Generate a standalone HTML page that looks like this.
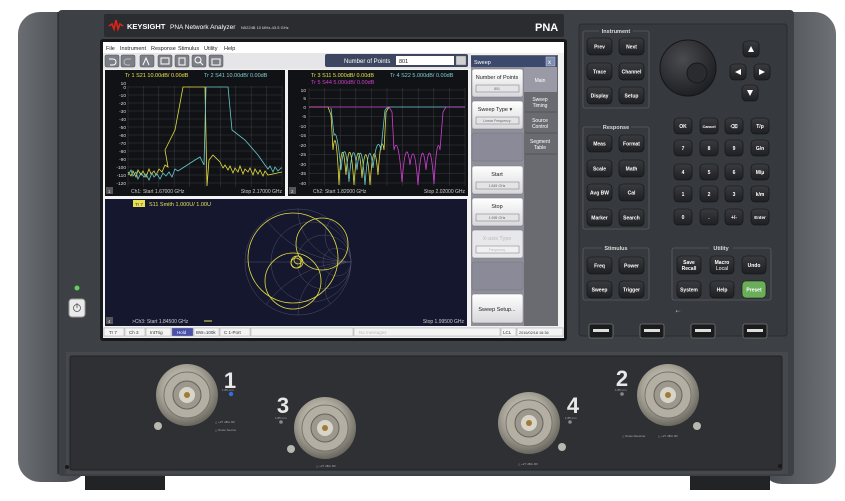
<!DOCTYPE html>
<html><head><meta charset="utf-8"><style>
html,body{margin:0;padding:0;background:#fff;}
svg{display:block}
text{font-family:"Liberation Sans",sans-serif}
</style></head><body>
<svg width="845" height="501" viewBox="0 0 845 501" xmlns="http://www.w3.org/2000/svg">
<defs>
<linearGradient id="side" x1="0" x2="1"><stop offset="0" stop-color="#6a6d72"/><stop offset=".5" stop-color="#55585d"/><stop offset="1" stop-color="#45484c"/></linearGradient>
<linearGradient id="sideR" x1="0" x2="1"><stop offset="0" stop-color="#45484c"/><stop offset=".5" stop-color="#5a5d62"/><stop offset="1" stop-color="#6e7176"/></linearGradient>
<linearGradient id="key" x1="0" y1="0" x2="0" y2="1"><stop offset="0" stop-color="#3a3b3f"/><stop offset="1" stop-color="#1e1f22"/></linearGradient>
<linearGradient id="btn" x1="0" y1="0" x2="0" y2="1"><stop offset="0" stop-color="#ffffff"/><stop offset="1" stop-color="#d8d8dc"/></linearGradient>
<radialGradient id="conn" cx=".45" cy=".4" r=".6"><stop offset="0" stop-color="#e6e3da"/><stop offset=".6" stop-color="#a8a498"/><stop offset="1" stop-color="#6a675f"/></radialGradient>
<radialGradient id="knob" cx=".4" cy=".35" r=".7"><stop offset="0" stop-color="#4a4b4f"/><stop offset="1" stop-color="#1c1d20"/></radialGradient>
<clipPath id="p3"><rect x="105" y="199" width="362" height="127"/></clipPath>
</defs>

<!-- body sides -->
<rect x="18" y="12" width="70" height="470" rx="22" fill="url(#side)"/>
<rect x="760" y="12" width="76" height="472" rx="22" fill="url(#sideR)"/>
<!-- feet -->
<rect x="85" y="472" width="80" height="18" fill="#222325"/>
<rect x="690" y="472" width="80" height="18" fill="#222325"/>
<!-- front panel -->
<rect x="58" y="10" width="736" height="466" rx="4" fill="#3d4044"/>
<line x1="58" y1="12" x2="58" y2="474" stroke="#222" stroke-width="1"/>
<rect x="579" y="24" width="208" height="312" rx="3" fill="#36393d" stroke="#2a2c2f"/>

<!-- header strip -->
<rect x="104" y="14" width="460" height="23" rx="2" fill="#2a2c2f"/>
<path d="M109 26 l3 -2 l2 5 l2 -9 l2 9 l2 -5 l3 2" fill="none" stroke="#e2231a" stroke-width="1.6"/>
<text x="127" y="29" font-size="7.5" fill="#fff" font-weight="bold">KEYSIGHT</text>
<text x="170" y="29" font-size="6.5" fill="#fff">PNA Network Analyzer</text>
<text x="241" y="29" font-size="4" fill="#ddd">N5224B  10 MHz-43.5 GHz</text>
<text x="535" y="31" font-size="11" fill="#fff" font-weight="bold">PNA</text>

<!-- screen bezel -->
<rect x="100" y="39" width="467" height="302" rx="3" fill="#161718"/>
<rect x="103" y="42" width="461" height="296" fill="#f2f2f2"/>
<rect x="103" y="42" width="461" height="11" fill="#fff"/>
<g font-size="5.5" fill="#222">
<text x="106" y="50">File</text><text x="120" y="50">Instrument</text><text x="151" y="50">Response</text><text x="178" y="50">Stimulus</text><text x="204" y="50">Utility</text><text x="224" y="50">Help</text>
</g>
<rect x="103" y="53" width="368" height="16" fill="#e6e6e8"/>
<g fill="#7c7f86" stroke="#50535a" stroke-width=".5">
<rect x="105" y="55" width="14" height="12" rx="1.5"/><rect x="121" y="55" width="14" height="12" rx="1.5"/><rect x="140" y="55" width="14" height="12" rx="1.5"/><rect x="158" y="55" width="14" height="12" rx="1.5"/><rect x="175" y="55" width="14" height="12" rx="1.5"/><rect x="192" y="55" width="14" height="12" rx="1.5"/><rect x="209" y="55" width="14" height="12" rx="1.5"/>
</g>
<g fill="none" stroke="#fff" stroke-width="1">
<path d="M109 59 h4 a3 3 0 0 1 0 6 h-3"/><path d="M131 59 h-4 a3 3 0 0 0 0 6 h3" stroke="#bbb"/><path d="M143 65 l3 -7 l3 7"/><rect x="161" y="58" width="8" height="6"/><rect x="179" y="58" width="6" height="7"/><circle cx="198" cy="60" r="3"/><path d="M200 62 l3 3"/><rect x="212" y="59" width="8" height="6"/>
</g>
<rect x="325" y="54" width="143" height="13" rx="2" fill="#3c4660"/>
<text x="344" y="63" font-size="6" fill="#fff">Number of Points</text>
<rect x="396" y="56" width="58" height="9" fill="#fff"/>
<text x="399" y="63" font-size="5.5" fill="#222">801</text>
<rect x="456" y="56" width="10" height="9" fill="#d0d0d0" stroke="#666" stroke-width=".4"/>

<!-- sidebar -->
<rect x="471" y="55" width="87" height="271" fill="#6a6b70"/>
<rect x="471" y="56" width="86" height="11" fill="#3b4a6c"/>
<text x="474" y="64" font-size="5.5" fill="#fff">Sweep</text>
<rect x="546" y="57" width="9" height="9" fill="#7d8fb0" stroke="#ccd" stroke-width=".5"/>
<text x="548" y="64" font-size="6" fill="#fff">x</text>
<rect x="471" y="67" width="53" height="259" fill="#8f8f9c"/>
<rect x="524" y="67" width="33" height="25" fill="#9a9aa6"/>
<g font-size="5" fill="#fff" text-anchor="middle">
<text x="540" y="82">Main</text>
<text x="540" y="101">Sweep</text><text x="540" y="107">Timing</text>
<line x1="525" y1="112" x2="557" y2="112" stroke="#555"/>
<text x="540" y="122">Source</text><text x="540" y="128">Control</text>
<line x1="525" y1="133" x2="557" y2="133" stroke="#555"/>
<text x="540" y="143">Segment</text><text x="540" y="149">Table</text>
<line x1="525" y1="154" x2="557" y2="154" stroke="#555"/>
</g>
<g stroke="#777" stroke-width=".5">
<rect x="472" y="69" width="51" height="28" rx="2" fill="url(#btn)"/>
<rect x="472" y="101" width="51" height="28" rx="2" fill="url(#btn)"/>
<rect x="472" y="133" width="51" height="28" rx="2" fill="#8a8a98"/>
<rect x="472" y="166" width="51" height="28" rx="2" fill="url(#btn)"/>
<rect x="472" y="198" width="51" height="28" rx="2" fill="url(#btn)"/>
<rect x="472" y="230" width="51" height="28" rx="2" fill="#e8e8ec"/>
<rect x="472" y="262" width="51" height="28" rx="2" fill="#8a8a98"/>
<rect x="472" y="294" width="51" height="29" rx="2" fill="url(#btn)"/>
<rect x="476" y="85" width="43" height="7" fill="#e4e4e8"/>
<rect x="476" y="117" width="43" height="7" fill="#e4e4e8"/>
<rect x="476" y="182" width="43" height="7" fill="#e4e4e8"/>
<rect x="476" y="214" width="43" height="7" fill="#e4e4e8"/>
<rect x="476" y="246" width="43" height="7" fill="#f0f0f2"/>
</g>
<g font-size="5.5" fill="#222" text-anchor="middle">
<text x="497" y="79">Number of Points</text><text x="497" y="90" font-size="3.5" fill="#666">801</text>
<text x="495" y="111">Sweep Type  ▾</text><text x="497" y="122" font-size="3.5" fill="#666">Linear Frequency</text>
<text x="497" y="176">Start</text><text x="497" y="187" font-size="3.5" fill="#666">1.845 GHz</text>
<text x="497" y="208">Stop</text><text x="497" y="219" font-size="3.5" fill="#666">1.995 GHz</text>
<text x="497" y="240" fill="#bbb">X-axis Type</text><text x="497" y="251" font-size="3.5" fill="#bbb">Frequency</text>
<text x="497" y="311">Sweep Setup...</text>
</g>

<!-- plot 1 -->
<rect x="105" y="70" width="180" height="126" fill="#101215"/>
<g stroke="#3a3d42" stroke-width=".5">
<path d="M128 86 V187 M143.4 86 V187 M158.8 86 V187 M174.2 86 V187 M189.6 86 V187 M205 86 V187 M220.4 86 V187 M235.8 86 V187 M251.2 86 V187 M266.6 86 V187 M282 86 V187"/>
<path d="M128 87 H282 M128 95 H282 M128 103 H282 M128 111 H282 M128 119 H282 M128 127 H282 M128 135 H282 M128 143 H282 M128 151 H282 M128 159 H282 M128 167 H282 M128 175 H282 M128 183 H282"/>
</g>
<text x="125" y="77" font-size="5.5" fill="#e8e050">Tr 1  S21 10.00dB/ 0.00dB</text>
<text x="204" y="77" font-size="5.5" fill="#7fd0d0">Tr 2  S41 10.00dB/ 0.00dB</text>
<g font-size="4.8" fill="#ddd" text-anchor="end">
<text x="126" y="85">10</text><text x="126" y="89">0</text><text x="126" y="97">-10</text><text x="126" y="105">-20</text><text x="126" y="113">-30</text><text x="126" y="121">-40</text><text x="126" y="129">-50</text><text x="126" y="137">-60</text><text x="126" y="145">-70</text><text x="126" y="153">-80</text><text x="126" y="161">-90</text><text x="126" y="169">-100</text><text x="126" y="177">-110</text><text x="126" y="185">-120</text>
</g>
<path d="M128 172 l3 4 l2 -5 l3 6 l2 -7 l3 5 l2 -4 l3 6 l3 -8 l2 5 l3 -3 l2 4 l3 -6 l3 3 l3 -7 l3 2 L165 150 L175 130 L183 87 L205 87 L207 186 L209 160 L213 155 L220 162 l3 6 l2 -3 l3 5 l2 -4 l3 7 l2 -5 l3 4 l2 -6 l3 8 l2 -5 l3 3 l2 -4 l3 7 l2 -6 l3 5 l2 -4 l3 6 l2 -5 l3 4 L282 172" fill="none" stroke="#e2dc40" stroke-width=".8"/>
<path d="M128 175 l3 -5 l2 6 l3 -4 l2 7 l3 -6 l3 4 l2 -3 l3 6 l3 -7 l2 4 l3 -3 l3 5 l3 -6 l3 3 l3 -4 l3 5 l3 -8 l3 2 L195 160 L200 157 L204 165 L206 87 L228 87 L232 130 L245 140 L258 155 L265 165 l3 4 l2 -3 l3 6 l2 -5 l3 4 l3 -3 L282 168" fill="none" stroke="#6ac8cc" stroke-width=".8"/>
<rect x="106" y="187" width="7" height="7" fill="#555"/><text x="108" y="193" font-size="4.5" fill="#ddd">1</text>
<text x="131" y="193" font-size="5" fill="#ccc">Ch1:  Start  1.67000 GHz</text>
<text x="282" y="193" font-size="5" fill="#ccc" text-anchor="end">Stop  2.17000 GHz</text>

<!-- plot 2 -->
<rect x="288" y="70" width="180" height="126" fill="#101215"/>
<g stroke="#3a3d42" stroke-width=".5">
<path d="M309 88 V186 M324.6 88 V186 M340.2 88 V186 M355.8 88 V186 M371.4 88 V186 M387 88 V186 M402.6 88 V186 M418.2 88 V186 M433.8 88 V186 M449.4 88 V186 M465 88 V186"/>
<path d="M309 90 H465 M309 98.6 H465 M309 107 H465 M309 116.4 H465 M309 126 H465 M309 135.4 H465 M309 145 H465 M309 154.4 H465 M309 164 H465 M309 173.4 H465 M309 183 H465"/>
</g>
<text x="311" y="77" font-size="5.5" fill="#e8e050">Tr 3  S11 5.000dB/ 0.00dB</text>
<text x="390" y="77" font-size="5.5" fill="#7fd0d0">Tr 4  S22 5.000dB/ 0.00dB</text>
<text x="311" y="84" font-size="5.5" fill="#d040d0">Tr 5  S44 5.000dB/ 0.00dB</text>
<g font-size="4.8" fill="#ddd" text-anchor="end">
<text x="306" y="92">10</text><text x="306" y="100">5</text><text x="306" y="109">0</text><text x="306" y="118">-5</text><text x="306" y="128">-10</text><text x="306" y="137">-15</text><text x="306" y="147">-20</text><text x="306" y="156">-25</text><text x="306" y="166">-30</text><text x="306" y="175">-35</text><text x="306" y="185">-40</text>
</g>
<path d="M309 107 H328 L331 115 L333 150 Q336 120 339 185 Q342 125 346 175 Q350 125 354 185 Q358 125 362 178 Q366 128 370 185 Q374 128 378 175 Q381 130 384 150 L386 112 L389 107" fill="none" stroke="#e2dc40" stroke-width=".8"/>
<path d="M331 108 L334 135 Q337 128 341 170 Q345 128 349 182 Q353 130 357 170 Q361 130 365 185 Q369 132 373 168 Q377 133 381 150 L385 110 L388 107 H465" fill="none" stroke="#6ac8cc" stroke-width=".8"/>
<path d="M309 107 H389 L392 112 L394 150 Q398 132 402 182 Q406 132 410 165 Q414 135 418 185 Q422 130 426 170 Q430 130 434 184 Q437 132 440 150 L443 112 L446 107 H465" fill="none" stroke="#d040d0" stroke-width=".8"/>
<rect x="289" y="187" width="7" height="7" fill="#555"/><text x="291" y="193" font-size="4.5" fill="#ddd">2</text>
<text x="313" y="193" font-size="5" fill="#ccc">Ch2:  Start  1.82000 GHz</text>
<text x="465" y="193" font-size="5" fill="#ccc" text-anchor="end">Stop  2.02000 GHz</text>

<!-- plot 3 smith -->
<rect x="105" y="199" width="362" height="127" fill="#15172f"/>
<g clip-path="url(#p3)">
<g fill="none" stroke="#4e5066" stroke-width=".5">
<circle cx="298" cy="262" r="53"/>
<circle cx="311" cy="262" r="40"/><circle cx="324" cy="262" r="27"/><circle cx="337" cy="262" r="14"/>
<path d="M245 262 H351"/>
</g>
<clipPath id="sc"><circle cx="298" cy="262" r="53"/></clipPath>
<g fill="none" stroke="#4e5066" stroke-width=".5" clip-path="url(#sc)">
<circle cx="351" cy="209" r="53"/><circle cx="351" cy="315" r="53"/>
<circle cx="351" cy="236" r="26"/><circle cx="351" cy="288" r="26"/>
<circle cx="351" cy="156" r="106"/><circle cx="351" cy="368" r="106"/>
</g>
<g fill="none" stroke="#e2dc40" stroke-width=".8">
<circle cx="293" cy="258" r="45"/>
<circle cx="322" cy="244" r="26"/>
<circle cx="293" cy="281" r="28"/>
<circle cx="297" cy="262" r="6"/><circle cx="298" cy="260" r="4"/><circle cx="296" cy="263" r="5"/>
</g>
</g>
<rect x="133" y="200" width="12" height="7" fill="#e8e050"/><text x="135" y="206" font-size="4.5" fill="#333">Tr 7</text>
<text x="149" y="206" font-size="5.5" fill="#e8e050">S11 Smith 1.000U/ 1.00U</text>
<rect x="106" y="317" width="7" height="7" fill="#555"/><text x="108" y="323" font-size="4.5" fill="#ddd">4</text>
<text x="132" y="323" font-size="5" fill="#ccc">&gt;Ch3:  Start   1.84500 GHz</text>
<line x1="204" y1="321" x2="212" y2="321" stroke="#e8e050"/>
<text x="464" y="323" font-size="5" fill="#ccc" text-anchor="end">Stop  1.99500 GHz</text>

<!-- status bar -->
<rect x="103" y="327" width="461" height="10" fill="#e6e6e8"/>
<g fill="#f4f4f4" stroke="#999" stroke-width=".4">
<rect x="104" y="328" width="20" height="8"/><rect x="125" y="328" width="20" height="8"/><rect x="146" y="328" width="25" height="8"/><rect x="172" y="328" width="21" height="8" fill="#4a4fa8"/><rect x="194" y="328" width="25" height="8"/><rect x="220" y="328" width="30" height="8"/><rect x="251" y="328" width="102" height="8"/><rect x="354" y="328" width="146" height="8"/><rect x="501" y="328" width="15" height="8"/><rect x="517" y="328" width="46" height="8"/>
</g>
<g font-size="4.5" fill="#333">
<text x="109" y="334">Tr 7</text><text x="129" y="334">Ch 3</text><text x="150" y="334">IntTrig</text><text x="177" y="334" fill="#fff">Hold</text><text x="196" y="334">BW=100k</text><text x="224" y="334">C  1-Port</text><text x="359" y="334" fill="#bbb">No messages</text><text x="503" y="334">LCL</text><text x="519" y="334" font-size="3.8">2016/02/18 16:36</text>
</g>

<!-- power area -->
<circle cx="77" cy="288" r="2.5" fill="#5fd05a"/>
<rect x="69" y="299" width="16" height="18" rx="3" fill="#eaeaea" stroke="#999"/>
<circle cx="77" cy="308" r="3.5" fill="none" stroke="#555" stroke-width=".8"/><line x1="77" y1="303" x2="77" y2="308" stroke="#555" stroke-width=".8"/>

<!-- keypad groups -->
<g fill="none" stroke="#6a6d72" stroke-width=".6">
<rect x="583" y="31" width="66" height="77" rx="2"/>
<rect x="583" y="127" width="66" height="102" rx="2"/>
<rect x="583" y="248" width="66" height="52" rx="2"/>
<rect x="672" y="248" width="99" height="52" rx="2"/>
</g>
<g font-size="5.5" fill="#ddd" text-anchor="middle" font-weight="bold">
<rect x="599" y="28" width="34" height="6" fill="#36393d"/><text x="616" y="33">Instrument</text>
<rect x="601" y="124" width="30" height="6" fill="#36393d"/><text x="616" y="129">Response</text>
<rect x="602" y="245" width="28" height="6" fill="#36393d"/><text x="616" y="250">Stimulus</text>
<rect x="709" y="245" width="24" height="6" fill="#36393d"/><text x="721" y="250">Utility</text>
</g>
<g fill="url(#key)" stroke="#111" stroke-width=".6">
<rect x="587" y="38" width="25" height="17" rx="4"/><rect x="619" y="38" width="25" height="17" rx="4"/>
<rect x="587" y="63" width="25" height="17" rx="4"/><rect x="619" y="63" width="25" height="17" rx="4"/>
<rect x="587" y="87" width="25" height="17" rx="4"/><rect x="619" y="87" width="25" height="17" rx="4"/>
<rect x="587" y="135" width="25" height="17" rx="4"/><rect x="619" y="135" width="25" height="17" rx="4"/>
<rect x="587" y="160" width="25" height="17" rx="4"/><rect x="619" y="160" width="25" height="17" rx="4"/>
<rect x="587" y="184" width="25" height="17" rx="4"/><rect x="619" y="184" width="25" height="17" rx="4"/>
<rect x="587" y="209" width="25" height="17" rx="4"/><rect x="619" y="209" width="25" height="17" rx="4"/>
<rect x="587" y="257" width="25" height="17" rx="4"/><rect x="619" y="257" width="25" height="17" rx="4"/>
<rect x="587" y="281" width="25" height="17" rx="4"/><rect x="619" y="281" width="25" height="17" rx="4"/>
<rect x="677" y="256" width="24" height="18" rx="4"/><rect x="710" y="256" width="24" height="18" rx="4"/><rect x="742" y="256" width="24" height="18" rx="4"/>
<rect x="677" y="281" width="24" height="17" rx="4"/><rect x="710" y="281" width="24" height="17" rx="4"/>
<rect x="742" y="281" width="24" height="17" rx="4" fill="#6aae5a"/>
<rect x="674" y="118" width="18" height="16" rx="4"/><rect x="700" y="118" width="18" height="16" rx="4"/><rect x="725" y="118" width="18" height="16" rx="4"/><rect x="751" y="118" width="18" height="16" rx="4"/>
<rect x="674" y="140" width="18" height="16" rx="4"/><rect x="700" y="140" width="18" height="16" rx="4"/><rect x="725" y="140" width="18" height="16" rx="4"/><rect x="751" y="140" width="18" height="16" rx="4"/>
<rect x="674" y="164" width="18" height="16" rx="4"/><rect x="700" y="164" width="18" height="16" rx="4"/><rect x="725" y="164" width="18" height="16" rx="4"/><rect x="751" y="164" width="18" height="16" rx="4"/>
<rect x="674" y="186" width="18" height="16" rx="4"/><rect x="700" y="186" width="18" height="16" rx="4"/><rect x="725" y="186" width="18" height="16" rx="4"/><rect x="751" y="186" width="18" height="16" rx="4"/>
<rect x="674" y="209" width="18" height="16" rx="4"/><rect x="700" y="209" width="18" height="16" rx="4"/><rect x="725" y="209" width="18" height="16" rx="4"/><rect x="751" y="209" width="18" height="16" rx="4"/>
<rect x="743" y="41" width="16" height="16" rx="4"/><rect x="730" y="64" width="16" height="16" rx="4"/><rect x="754" y="64" width="16" height="16" rx="4"/><rect x="742" y="85" width="16" height="16" rx="4"/>
</g>
<g font-size="5" fill="#fff" text-anchor="middle" font-weight="bold">
<text x="599.5" y="48.5">Prev</text><text x="631.5" y="48.5">Next</text>
<text x="599.5" y="73.5">Trace</text><text x="631.5" y="73.5">Channel</text>
<text x="599.5" y="97.5">Display</text><text x="631.5" y="97.5">Setup</text>
<text x="599.5" y="145.5">Meas</text><text x="631.5" y="145.5">Format</text>
<text x="599.5" y="170.5">Scale</text><text x="631.5" y="170.5">Math</text>
<text x="599.5" y="194.5">Avg BW</text><text x="631.5" y="194.5">Cal</text>
<text x="599.5" y="219.5">Marker</text><text x="631.5" y="219.5">Search</text>
<text x="599.5" y="267.5">Freq</text><text x="631.5" y="267.5">Power</text>
<text x="599.5" y="291.5">Sweep</text><text x="631.5" y="291.5">Trigger</text>
<text x="689" y="264">Save</text><text x="689" y="270">Recall</text>
<text x="722" y="264">Macro</text><text x="722" y="270" font-weight="normal">Local</text>
<text x="754" y="267">Undo</text>
<text x="689" y="291.5">System</text><text x="722" y="291.5">Help</text><text x="754" y="291.5">Preset</text>
<text x="683" y="128">OK</text><text x="709" y="128" font-size="4">Cancel</text><text x="734" y="128">⌫</text><text x="760" y="128">T/p</text>
<text x="683" y="150">7</text><text x="709" y="150">8</text><text x="734" y="150">9</text><text x="760" y="150">G/n</text>
<text x="683" y="174">4</text><text x="709" y="174">5</text><text x="734" y="174">6</text><text x="760" y="174">M/μ</text>
<text x="683" y="196">1</text><text x="709" y="196">2</text><text x="734" y="196">3</text><text x="760" y="196">k/m</text>
<text x="683" y="219">0</text><text x="709" y="219">.</text><text x="734" y="219">+/-</text><text x="760" y="219" font-size="4.5">Enter</text>
</g>
<g fill="#fff">
<path d="M751 46 l-3 6 h6z"/><path d="M735 72 l6 -3 v6z"/><path d="M765 72 l-6 -3 v6z"/><path d="M750 96 l-3 -6 h6z"/>
</g>
<circle cx="688" cy="68" r="28" fill="url(#knob)" stroke="#141517"/>
<circle cx="697" cy="73" r="10" fill="#2a2b2e" stroke="#18191b"/>
<text x="678" y="313" font-size="6" fill="#aaa" text-anchor="middle">⇠</text>
<g fill="#1a1b1d" stroke="#777" stroke-width=".8">
<rect x="589" y="324" width="24" height="14" rx="2"/><rect x="640" y="324" width="24" height="14" rx="2"/><rect x="691" y="324" width="24" height="14" rx="2"/><rect x="743" y="324" width="24" height="14" rx="2"/>
</g>
<g fill="#ddd"><rect x="593" y="329" width="16" height="3"/><rect x="644" y="329" width="16" height="3"/><rect x="695" y="329" width="16" height="3"/><rect x="747" y="329" width="16" height="3"/></g>

<!-- port panel -->
<rect x="66" y="352" width="722" height="122" fill="#45484c"/>
<rect x="70" y="356" width="712" height="114" rx="2" fill="#2e3034" stroke="#222"/>
<g>
<circle cx="187" cy="395" r="31" fill="url(#conn)"/><circle cx="187" cy="395" r="23" fill="#b3afa3" stroke="#77746c"/><circle cx="187" cy="395" r="14" fill="#9c988d" stroke="#66635c"/><circle cx="187" cy="395" r="8" fill="#d8d4c8"/><circle cx="187" cy="395" r="3" fill="#a07a3a"/>
<circle cx="325" cy="428" r="31" fill="url(#conn)"/><circle cx="325" cy="428" r="23" fill="#b3afa3" stroke="#77746c"/><circle cx="325" cy="428" r="14" fill="#9c988d" stroke="#66635c"/><circle cx="325" cy="428" r="8" fill="#d8d4c8"/><circle cx="325" cy="428" r="3" fill="#a07a3a"/>
<circle cx="529" cy="423" r="31" fill="url(#conn)"/><circle cx="529" cy="423" r="23" fill="#b3afa3" stroke="#77746c"/><circle cx="529" cy="423" r="14" fill="#9c988d" stroke="#66635c"/><circle cx="529" cy="423" r="8" fill="#d8d4c8"/><circle cx="529" cy="423" r="3" fill="#a07a3a"/>
<circle cx="668" cy="395" r="31" fill="url(#conn)"/><circle cx="668" cy="395" r="23" fill="#b3afa3" stroke="#77746c"/><circle cx="668" cy="395" r="14" fill="#9c988d" stroke="#66635c"/><circle cx="668" cy="395" r="8" fill="#d8d4c8"/><circle cx="668" cy="395" r="3" fill="#a07a3a"/>
</g>
<g fill="#b8b8b0"><circle cx="158" cy="426" r="4"/><circle cx="291" cy="449" r="4"/><circle cx="562" cy="447" r="4"/><circle cx="697" cy="426" r="4"/></g>
<g font-size="22" fill="#e8e8e8" font-weight="bold" text-anchor="middle">
<text x="230" y="388">1</text><text x="283" y="413">3</text><text x="573" y="413">4</text><text x="622" y="386">2</text>
</g>
<circle cx="231" cy="394" r="2.2" fill="#3a6ae8"/>
<g fill="#888"><circle cx="281" cy="422" r="1.8"/><circle cx="570" cy="422" r="1.8"/><circle cx="622" cy="394" r="1.8"/></g>
<g font-size="3" fill="#aaa">
<text x="222" y="391">1.85 mm</text><text x="275" y="419">1.85 mm</text><text x="565" y="419">1.85 mm</text><text x="615" y="391">1.85 mm</text>
<text x="215" y="423">△ +27 dBm RF</text><text x="215" y="431">△ Noise Source</text>
<text x="316" y="467">△ +27 dBm RF</text><text x="518" y="465">△ +27 dBm RF</text>
<text x="622" y="437">△ Noise Receiver</text><text x="658" y="437">△ +27 dBm RF</text>
</g>
<circle cx="67" cy="467" r="2" fill="#1a1a1a"/><circle cx="780" cy="466" r="2" fill="#1a1a1a"/>
</svg>
</body></html>
